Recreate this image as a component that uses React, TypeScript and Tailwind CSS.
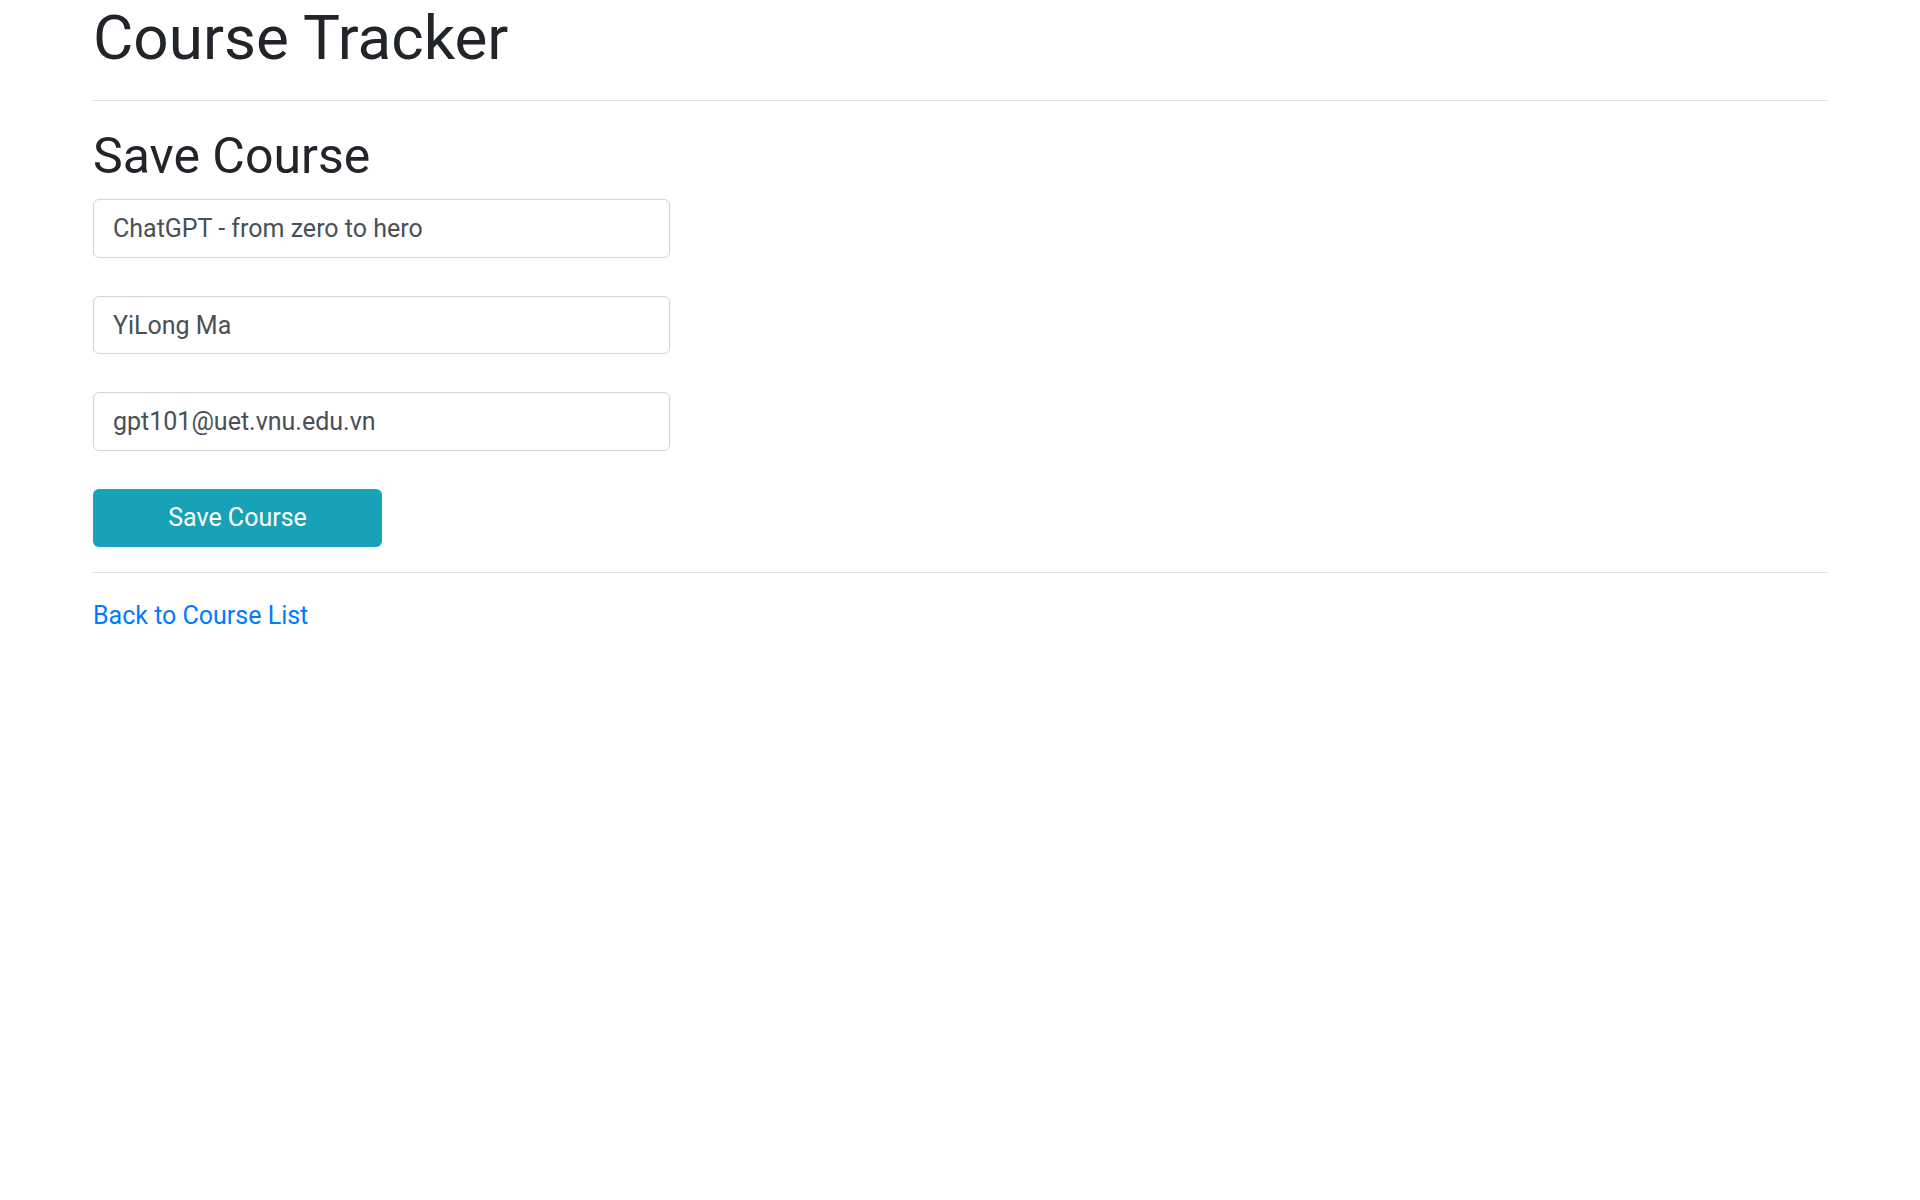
import React from 'react';

const fields = ['ChatGPT - from zero to hero', 'YiLong Ma', 'gpt101@uet.vnu.edu.vn'];

const App: React.FC = () => {
  return (
    <div className="min-h-screen bg-white font-['Roboto','Liberation_Sans',sans-serif] text-[#212529]">
      <div className="mx-[93px] pt-[1px]">
        <h1 className="text-[62px] leading-[1.2] font-normal">Course Tracker</h1>
        <hr className="mt-[25px] border-0 border-t border-[#e3e3e3]" />
        <h2 className="mt-[25px] text-[50px] leading-[1.2] font-normal">Save Course</h2>
        <form className="mt-[13px] flex flex-col gap-[38px]" onSubmit={(e) => e.preventDefault()}>
          {fields.map((value) => (
            <input
              key={value}
              defaultValue={value}
              className="block h-[58.5px] w-[577px] rounded-[6px] border border-[#ced4da] bg-white px-[19px] text-[25px] text-[#495057] outline-none"
            />
          ))}
          <button
            type="submit"
            className="h-[58px] w-[289px] rounded-[6px] bg-[#17a2b8] text-[25px] text-white"
          >
            Save Course
          </button>
        </form>
        <hr className="mt-[25px] border-0 border-t border-[#e3e3e3]" />
        <a href="#" className="mt-[24px] block w-fit text-[25px] leading-[1.5] text-[#007bff]">
          Back to Course List
        </a>
      </div>
    </div>
  );
};

export default App;
